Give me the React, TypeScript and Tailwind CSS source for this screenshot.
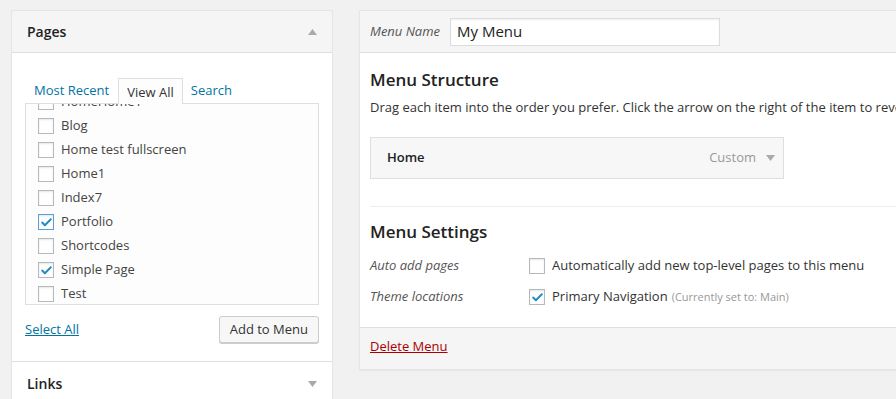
import { Check } from "lucide-react";

const pages = [
  { label: "HomeHome1", checked: false },
  { label: "Blog", checked: false },
  { label: "Home test fullscreen", checked: false },
  { label: "Home1", checked: false },
  { label: "Index7", checked: false },
  { label: "Portfolio", checked: true, focus: true },
  { label: "Shortcodes", checked: false },
  { label: "Simple Page", checked: true },
  { label: "Test", checked: false },
];

function Box({ checked, focus }: { checked?: boolean; focus?: boolean }) {
  return (
    <span
      className={`flex h-[16px] w-[16px] shrink-0 items-center justify-center border bg-white shadow-[inset_0_1px_2px_rgba(0,0,0,0.1)] ${
        focus ? "border-[#5b9dd9]" : "border-[#b4b9be]"
      }`}
    >
      {checked && <Check size={13} strokeWidth={3.5} className="text-[#1e8cbe]" />}
    </span>
  );
}

function Arrow({ up }: { up?: boolean }) {
  return (
    <svg width="9" height="6" viewBox="0 0 9 6" className="shrink-0">
      {up ? (
        <polygon points="4.5,0 9,6 0,6" fill="#aaaaaa" />
      ) : (
        <polygon points="0,0 9,0 4.5,6" fill="#aaaaaa" />
      )}
    </svg>
  );
}

export default function App() {
  return (
    <div className="h-[399px] w-[896px] overflow-hidden bg-[#f1f1f1] font-['Open_Sans',sans-serif] text-[13px] text-[#444]">
      <div className="flex items-start pl-[11px] pt-[10px]">
        {/* Left: Pages accordion */}
        <div className="w-[322px] shrink-0 border border-[#e5e5e5] bg-white shadow-[0_1px_1px_rgba(0,0,0,0.04)]">
          <div className="flex h-[42px] items-center justify-between border-b border-[#dfdfdf] bg-[#f5f5f5] pl-[15px] pr-[15px]">
            <span className="text-[14px] font-semibold text-[#222]">Pages</span>
            <Arrow up />
          </div>

          <div className="border-b border-[#dfdfdf] px-[13px] pb-[18px] pt-[24px]">
            <div className="flex items-end text-[13px]">
              <span className="flex h-[26px] items-center pl-[9px] pr-[9px] pt-[2px] text-[#0074a2]">Most Recent</span>
              <span className="relative z-10 -mb-px flex h-[26px] items-center border border-b-0 border-[#dfdfdf] bg-[#fdfdfd] px-[8px] pt-[2px] text-[#333]">
                View All
              </span>
              <span className="flex h-[26px] items-center pl-[8px] pt-[2px] text-[#0074a2]">Search</span>
            </div>
            <div className="h-[202px] overflow-hidden border border-[#dfdfdf] bg-[#fdfdfd]">
              <div className="-mt-[14px] pl-[12px]">
                {pages.map((p) => (
                  <div key={p.label} className="flex h-[24px] items-center gap-[7px] text-[#444]">
                    <Box checked={p.checked} focus={p.focus} />
                    <span>{p.label}</span>
                  </div>
                ))}
              </div>
            </div>
            <div className="mt-[11px] flex items-center justify-between">
              <span className="text-[#0074a2] underline">Select All</span>
              <button className="h-[27px] rounded-[3px] border border-[#cccccc] bg-[#f7f7f7] px-[10px] text-[13px] text-[#333] shadow-[0_1px_0_#ccc]">
                Add to Menu
              </button>
            </div>
          </div>

          <div className="flex h-[43px] items-center justify-between pl-[15px] pr-[15px]">
            <span className="text-[14px] font-semibold text-[#222]">Links</span>
            <Arrow />
          </div>
        </div>

        {/* Right: Menu editor */}
        <div className="ml-[26px] w-[640px] shrink-0 border border-[#e5e5e5] bg-white shadow-[0_1px_1px_rgba(0,0,0,0.04)]">
          <div className="flex h-[42px] items-center border-b border-[#dfdfdf] bg-[#f5f5f5] px-[10px]">
            <span className="w-[80px] italic text-[#555]">Menu Name</span>
            <div className="flex h-[28px] w-[270px] items-center border border-[#dddddd] bg-white pl-[6px] text-[15px] text-[#222] shadow-[inset_0_1px_2px_rgba(0,0,0,0.07)]">
              My Menu
            </div>
          </div>

          <div className="px-[10px] pb-[18px] pt-[14px]">
            <h3 className="text-[17px] font-semibold leading-[26px] text-[#222]">Menu Structure</h3>
            <p className="mt-[2px] whitespace-nowrap leading-[24px] text-[#333]">
              Drag each item into the order you prefer. Click the arrow on the right of the item to reveal additional configuration options.
            </p>
            <div className="mt-[18px] flex h-[42px] w-[414px] items-center justify-between border border-[#dfdfdf] bg-[#f7f7f7] pl-[16px] pr-[8px]">
              <span className="font-semibold text-[#222]">Home</span>
              <span className="flex items-center gap-[10px] text-[#999]">
                Custom
                <Arrow />
              </span>
            </div>

            <div className="mt-[27px] border-t border-[#eeeeee] pt-[12px]">
              <h3 className="text-[17px] font-semibold leading-[26px] text-[#222]">Menu Settings</h3>
              <div className="mt-[9px] flex h-[24px] items-center">
                <span className="w-[159px] italic text-[#555]">Auto add pages</span>
                <Box />
                <span className="ml-[7px] text-[#333]">Automatically add new top-level pages to this menu</span>
              </div>
              <div className="mt-[7px] flex h-[24px] items-center">
                <span className="w-[159px] italic text-[#555]">Theme locations</span>
                <Box checked />
                <span className="ml-[7px] text-[#333]">Primary Navigation</span>
                <span className="ml-[4px] text-[11px] text-[#999]">(Currently set to: Main)</span>
              </div>
            </div>
          </div>

          <div className="flex h-[42px] items-center border-t border-[#dfdfdf] bg-[#f5f5f5] px-[10px] pb-[4px]">
            <span className="text-[#aa0000] underline">Delete Menu</span>
          </div>
        </div>
      </div>
    </div>
  );
}
